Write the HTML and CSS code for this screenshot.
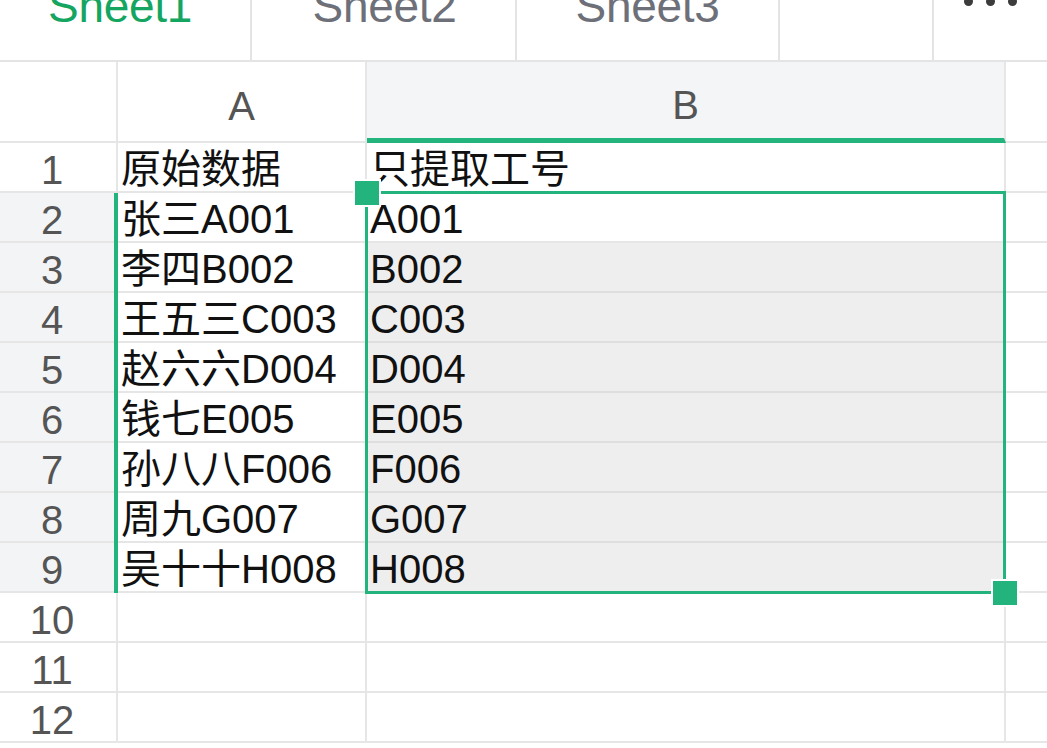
FILE: index.html
```html
<!DOCTYPE html>
<html lang="zh">
<head>
<meta charset="utf-8">
<title>Sheet</title>
<link rel="stylesheet" href="styles.css">
</head>
<body>
<div class="tabs">
  <div class="tab tab1 active"><span class="tab-label">Sheet1</span></div>
  <div class="tab tab2"><span class="tab-label">Sheet2</span></div>
  <div class="tab tab3"><span class="tab-label">Sheet3</span></div>
  <div class="tab tab4"></div>
  <div class="tab more"><span class="dot"></span><span class="dot"></span><span class="dot"></span></div>
</div>
<div class="sheet">
  <div class="grid">
    <div class="corner"></div>
    <div class="colhead">A</div>
    <div class="colhead colsel">B</div>
    <div class="colhead colc"></div>

    <div class="rowhead">1</div><div class="cell">原始数据</div><div class="cell">只提取工号</div><div class="cell colc"></div>
    <div class="rowhead rsel">2</div><div class="cell">张三A001</div><div class="cell">A001</div><div class="cell colc"></div>
    <div class="rowhead rsel">3</div><div class="cell">李四B002</div><div class="cell sel">B002</div><div class="cell colc"></div>
    <div class="rowhead rsel">4</div><div class="cell">王五三C003</div><div class="cell sel">C003</div><div class="cell colc"></div>
    <div class="rowhead rsel">5</div><div class="cell">赵六六D004</div><div class="cell sel">D004</div><div class="cell colc"></div>
    <div class="rowhead rsel">6</div><div class="cell">钱七E005</div><div class="cell sel">E005</div><div class="cell colc"></div>
    <div class="rowhead rsel">7</div><div class="cell">孙八八F006</div><div class="cell sel">F006</div><div class="cell colc"></div>
    <div class="rowhead rsel">8</div><div class="cell">周九G007</div><div class="cell sel">G007</div><div class="cell colc"></div>
    <div class="rowhead rsel">9</div><div class="cell">吴十十H008</div><div class="cell sel">H008</div><div class="cell colc"></div>
    <div class="rowhead">10</div><div class="cell"></div><div class="cell"></div><div class="cell colc"></div>
    <div class="rowhead">11</div><div class="cell"></div><div class="cell"></div><div class="cell colc"></div>
    <div class="rowhead">12</div><div class="cell"></div><div class="cell"></div><div class="cell colc"></div>
  </div>
  <div class="rowbar"></div>
  <div class="selection"></div>
  <div class="handle handle-tl"></div>
  <div class="handle handle-br"></div>
</div>
</body>
</html>
```

FILE: styles.css
```css
* { box-sizing: border-box; }
html, body {
  margin: 0;
  padding: 0;
  background: #ffffff;
  width: 1047px;
  height: 748px;
  overflow: hidden;
  font-family: "Liberation Sans", "Noto Sans CJK SC", sans-serif;
}

.tabs {
  display: flex;
  height: 62px;
  border-bottom: 2px solid #e4e4e4;
  overflow: hidden;
}
.tab {
  display: flex;
  justify-content: center;
  align-items: flex-start;
  height: 60px;
  border-right: 2px solid #e4e4e4;
  overflow: hidden;
}
.tab1 { width: 252px; padding-right: 10px; }
.tab2 { width: 265px; padding-left: 2px; }
.tab3 { width: 263px; }
.tab4 { width: 154px; }
.tab.more { flex: 1; border-right: none; gap: 13px; padding-left: 30px; justify-content: flex-start; }
.tab-label {
  font-size: 46px;
  line-height: 46px;
  margin-top: -17px;
  color: #6d7079;
  letter-spacing: -0.3px;
}
.tab.active .tab-label { color: #14a561; }
.dot {
  width: 9px;
  height: 9px;
  border-radius: 50%;
  background: #3c3c3c;
  margin-top: -3px;
}

.sheet {
  position: relative;
}
.grid {
  display: grid;
  grid-template-columns: 118px 249px 639px 41px;
  grid-template-rows: 81px repeat(12, 50px);
}
.corner, .colhead, .rowhead, .cell {
  border-right: 2px solid #e6e6e6;
  border-bottom: 2px solid #e6e6e6;
}
.colhead {
  text-align: center;
  font-size: 40px;
  line-height: 46px;
  padding-top: 21px;
  color: #555555;
}
.colhead.colsel {
  background: #f4f5f6;
  border-bottom: 5px solid #22b47c;
  padding-top: 20px;
}
.colc { border-right: none; }
.rowhead {
  text-align: center;
  padding-right: 12px;
  font-size: 40px;
  line-height: 46px;
  padding-top: 4px;
  color: #555555;
}
.rowhead.rsel { background: #f3f4f5; }
.cell {
  font-size: 40px;
  line-height: 46px;
  padding-top: 3px;
  padding-left: 3px;
  color: #111111;
  white-space: nowrap;
  overflow: hidden;
}
.cell.sel {
  background: #eeeeee;
  border-bottom-color: #dedede;
}

.rowbar {
  position: absolute;
  left: 114px;
  top: 131px;
  width: 4px;
  height: 400px;
  background: #22b47c;
}
.selection {
  position: absolute;
  left: 365px;
  top: 129px;
  width: 641px;
  height: 403px;
  border: 3px solid #22b47c;
}
.handle {
  position: absolute;
  width: 28px;
  height: 28px;
  background: #22b47c;
  border: 2px solid #ffffff;
}
.handle-tl { left: 353px; top: 117px; }
.handle-br { left: 991px; top: 517px; }
```
